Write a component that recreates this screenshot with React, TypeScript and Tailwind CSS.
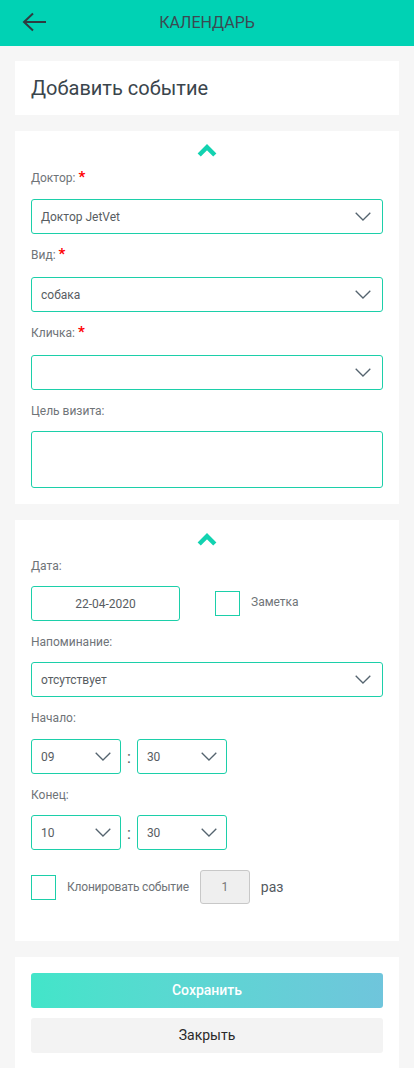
import React from "react";

const Chevron = () => (
  <svg width="16" height="9" viewBox="0 0 16 9" fill="none" className="shrink-0">
    <path d="M0.7 0.7 L8 8 L15.3 0.7" stroke="#55646f" strokeWidth="1.3" />
  </svg>
);

const Up = () => (
  <div className="flex justify-center">
    <svg width="20" height="13" viewBox="0 0 20 13" fill="none">
      <path d="M2.2 11 L10 3.2 L17.8 11" stroke="#12d2b0" strokeWidth="4.5" />
    </svg>
  </div>
);

const Label = ({ text, req, cls }: { text: string; req?: boolean; cls: string }) => (
  <div className={`flex items-center text-[12px] leading-[16px] text-[#6f7478] ${cls}`}>
    <span>{text}</span>
    {req && <span className="ml-[3px] text-[15px] font-bold text-[#ff0000] leading-[16px] -mt-[3px]">*</span>}
  </div>
);

const Select = ({ value, cls = "" }: { value: string; cls?: string }) => (
  <div className={`flex h-[35px] items-center justify-between rounded-[3px] border border-[#1ccfa9] pl-[9px] pr-[11px] text-[12px] text-[#585d62] ${cls}`}>
    <span>{value}</span>
    <Chevron />
  </div>
);

const TimeSelect = ({ value }: { value: string }) => (
  <div className="flex h-[35px] w-[90px] items-center justify-between rounded-[3px] border border-[#1ccfa9] pl-[9px] pr-[9px] text-[12px] text-[#585d62]">
    <span>{value}</span>
    <Chevron />
  </div>
);

export default function App() {
  return (
    <div className="min-h-[1068px] bg-[#f6f6f6] font-['Roboto',sans-serif]">
      <header className="relative flex h-[46px] items-center justify-center bg-[#00d2b4]">
        <svg className="absolute left-[22px] top-[12px]" width="25" height="20" viewBox="0 0 25 20" fill="none">
          <path d="M24 10 H2 M11 1.5 L2 10 L11 18.5" stroke="#2f3b40" strokeWidth="2" />
        </svg>
        <span className="text-[16px] text-[#3b4a52]">КАЛЕНДАРЬ</span>
      </header>

      <div className="mx-[15px] mt-[15px] flex h-[54px] items-center bg-white px-[16px]">
        <span className="text-[20px] text-[#3a454c]">Добавить событие</span>
      </div>

      <div className="mx-[15px] mt-[16px] bg-white px-[16px] pb-[16px] pt-[13px]">
        <Up />
        <Label text="Доктор:" req cls="mt-[13px] mb-[13px]" />
        <Select value="Доктор JetVet" />
        <Label text="Вид:" req cls="mt-[13px] mb-[14px]" />
        <Select value="собака" />
        <Label text="Кличка:" req cls="mt-[13px] mb-[14px]" />
        <Select value="" />
        <Label text="Цель визита:" cls="mt-[13px] mb-[12px]" />
        <div className="h-[57px] rounded-[3px] border border-[#1ccfa9]" />
      </div>

      <div className="mx-[15px] mt-[16px] bg-white px-[16px] pb-[37px] pt-[13px]">
        <Up />
        <Label text="Дата:" cls="mt-[12px] mb-[12px]" />
        <div className="flex items-center">
          <div className="flex h-[35px] w-[149px] items-center justify-center rounded-[3px] border border-[#1ccfa9] text-[12px] text-[#585d62]">
            22-04-2020
          </div>
          <div className="ml-[35px] h-[25px] w-[25px] border border-[#1ccfa9]" />
          <span className="ml-[11px] -mt-[4px] text-[12px] text-[#6f7478]">Заметка</span>
        </div>
        <Label text="Напоминание:" cls="mt-[13px] mb-[12px]" />
        <Select value="отсутствует" />
        <Label text="Начало:" cls="mt-[13px] mb-[13px]" />
        <div className="flex items-center">
          <TimeSelect value="09" />
          <span className="mx-[6px] mt-[2px] text-[16px] text-[#585d62]">:</span>
          <TimeSelect value="30" />
        </div>
        <Label text="Конец:" cls="mt-[13px] mb-[12px]" />
        <div className="flex items-center">
          <TimeSelect value="10" />
          <span className="mx-[6px] mt-[2px] text-[16px] text-[#585d62]">:</span>
          <TimeSelect value="30" />
        </div>
        <div className="mt-[20px] flex items-center">
          <div className="h-[25px] w-[25px] border border-[#1ccfa9]" />
          <span className="ml-[11px] text-[12px] tracking-[-0.2px] text-[#6f7478]">Клонировать событие</span>
          <div className="ml-[11px] flex h-[34px] w-[50px] items-center justify-center rounded-[3px] border border-[#c8c8c8] bg-[#efefef] text-[12px] text-[#777]">
            1
          </div>
          <span className="ml-[11px] text-[14px] text-[#555a5f]">раз</span>
        </div>
      </div>

      <div className="mx-[15px] mt-[16px] bg-white px-[16px] pb-[16px] pt-[16px]">
        <div className="flex h-[35px] items-center justify-center rounded-[3px] bg-gradient-to-r from-[#42e5c9] to-[#6fc5dc] text-[14px] font-medium text-white">
          Сохранить
        </div>
        <div className="mt-[10px] flex h-[35px] items-center justify-center rounded-[3px] bg-[#f3f3f3] text-[14px] text-[#2a2a2a]">
          Закрыть
        </div>
      </div>
    </div>
  );
}
